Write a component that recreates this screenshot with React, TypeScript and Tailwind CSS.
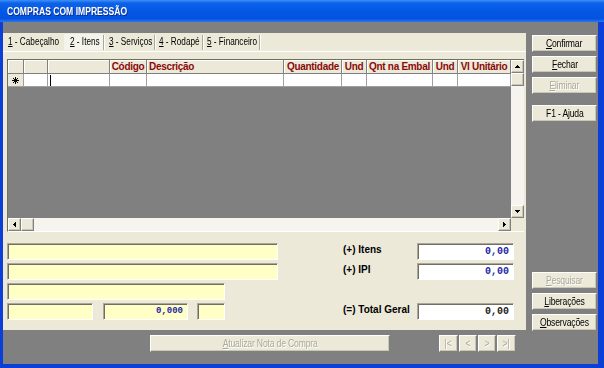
import React from "react";

const sunken =
  "border border-t-[#aca899] border-l-[#aca899] border-b-white border-r-white shadow-[inset_1px_1px_0_#716f64]";
const raised =
  "border border-t-white border-l-white border-b-[#808080] border-r-[#808080] shadow-[inset_-1px_-1px_0_#c9c6b6]";

function Arrow({ dir }: { dir: "up" | "down" | "left" | "right" }) {
  if (dir === "up")
    return (
      <svg width="5" height="3" viewBox="0 0 5 3" shapeRendering="crispEdges">
        <polygon points="2.5,0 5,3 0,3" fill="#000" />
      </svg>
    );
  if (dir === "down")
    return (
      <svg width="5" height="3" viewBox="0 0 5 3" shapeRendering="crispEdges">
        <polygon points="0,0 5,0 2.5,3" fill="#000" />
      </svg>
    );
  if (dir === "left")
    return (
      <svg width="3" height="5" viewBox="0 0 3 5" shapeRendering="crispEdges">
        <polygon points="3,0 3,5 0,2.5" fill="#000" />
      </svg>
    );
  return (
    <svg width="3" height="5" viewBox="0 0 3 5" shapeRendering="crispEdges">
      <polygon points="0,0 0,5 3,2.5" fill="#000" />
    </svg>
  );
}

function ScrollBtn({ dir }: { dir: "up" | "down" | "left" | "right" }) {
  return (
    <div className={`w-[13px] h-[13px] shrink-0 bg-[#ece9d8] flex items-center justify-center ${raised}`}>
      <Arrow dir={dir} />
    </div>
  );
}

function Btn({
  children,
  disabled,
  className = "",
}: {
  children: React.ReactNode;
  disabled?: boolean;
  className?: string;
}) {
  return (
    <div
      className={`h-[17px] shrink-0 flex items-center justify-center bg-[#ece9d8] leading-none ${raised} ${
        disabled ? "text-[#aca899] [text-shadow:1px_1px_0_#ffffff]" : "text-black"
      } ${className}`}
    >
      <span className="inline-block whitespace-nowrap scale-x-[0.86] tracking-[-0.2px]">{children}</span>
    </div>
  );
}

function Field({ className = "", value, blue = true, small }: { className?: string; value?: string; blue?: boolean; small?: boolean }) {
  return (
    <div className={`h-[17px] shrink-0 flex items-center justify-end pr-[4px] ${sunken} ${className}`}>
      {value && (
        <span
          className={`font-['Liberation_Mono',monospace] font-bold leading-none ${small ? "text-[9px]" : "text-[10px]"} ${
            blue ? "text-[#1f1fa8]" : "text-[#222222]"
          }`}
        >
          {value}
        </span>
      )}
    </div>
  );
}

function Star() {
  return (
    <svg width="7" height="7" viewBox="0 0 7 7" shapeRendering="crispEdges">
      <line x1="3.5" y1="0" x2="3.5" y2="7" stroke="#000" />
      <line x1="0" y1="3.5" x2="7" y2="3.5" stroke="#000" />
      <line x1="1" y1="1" x2="6" y2="6" stroke="#000" />
      <line x1="6" y1="1" x2="1" y2="6" stroke="#000" />
    </svg>
  );
}

const cols = [
  { w: "w-[16px]", label: "", align: "justify-center" },
  { w: "w-[24px]", label: "", align: "justify-center" },
  { w: "w-[62px]", label: "", align: "justify-center" },
  { w: "w-[37px]", label: "Código", align: "justify-center" },
  { w: "w-[137px]", label: "Descrição", align: "justify-start pl-[2px]" },
  { w: "w-[58px]", label: "Quantidade", align: "justify-end pr-[2px]" },
  { w: "w-[25px]", label: "Und", align: "justify-center" },
  { w: "w-[66px]", label: "Qnt na Embal", align: "justify-center" },
  { w: "w-[25px]", label: "Und", align: "justify-center" },
  { w: "w-[53px]", label: "Vl Unitário", align: "justify-center" },
];

function Tab({ n, t, cls }: { n: string; t: string; cls: string }) {
  return (
    <div className={`h-[16px] flex items-center whitespace-nowrap overflow-hidden ${cls}`}>
      <span className="inline-block origin-left scale-x-[0.82] leading-none">
        <u className="underline-offset-1">{n}</u>
        {t}
      </span>
    </div>
  );
}

function Sep() {
  return <div className="w-[2px] h-[15px] shrink-0 border-l border-l-[#aca899] border-r border-r-white" />;
}

export default function App() {
  return (
    <div className="w-[604px] h-[368px] flex flex-col bg-[#0b3fd7] overflow-hidden font-['Liberation_Sans',Arial,sans-serif] text-[10px] text-black select-none">
      {/* Title bar */}
      <div className="h-[22px] shrink-0 flex items-center pl-[7px] bg-[linear-gradient(to_bottom,#3d90f8_0%,#0d62e8_14%,#0458e6_50%,#0352df_85%,#2c78ef_100%)]">
        <span className="inline-block origin-left scale-x-[0.78] text-[11px] font-bold text-white [text-shadow:1px_1px_0_#0a2a8c] leading-none">
          COMPRAS COM IMPRESSÃO
        </span>
      </div>

      {/* Body */}
      <div className="flex-1 min-h-0 flex ml-[3px] mr-[6px] mb-[4px] bg-[#808080]">
        {/* Left column */}
        <div className="w-[523px] shrink-0 flex flex-col pt-[11px]">
          {/* Tab panel */}
          <div className="h-[297px] shrink-0 flex flex-col bg-[#ece9d8]">
            {/* Tab strip */}
            <div className="h-[18px] shrink-0 flex items-center">
              <Tab n="1" t=" - Cabeçalho" cls="w-[61px] pl-[5px]" />
              <Tab n="2" t=" - Itens" cls="w-[39px] pl-[6px] bg-[#f4f3ec]" />
              <Sep />
              <Tab n="3" t=" - Serviços" cls="w-[49px] pl-[4px]" />
              <Sep />
              <Tab n="4" t=" - Rodapé" cls="w-[46px] pl-[3px]" />
              <Sep />
              <Tab n="5" t=" - Financeiro" cls="w-[55px] pl-[3px]" />
              <Sep />
            </div>

            {/* Content */}
            <div className="flex-1 flex flex-col border-t border-t-white pt-[7px] pl-[4px] pr-[2px] pb-[10px]">
              {/* Grid */}
              <div className="h-[173px] shrink-0 flex flex-col border-l border-t border-b border-l-[#716f64] border-t-[#716f64] border-b-white">
                <div className="flex-1 min-h-0 flex">
                  <div className="w-[503px] flex flex-col bg-[#808080]">
                    {/* Header */}
                    <div className="h-[14px] flex bg-[#ece9d8]">
                      {cols.map((c, i) => (
                        <div
                          key={i}
                          className={`${c.w} h-[14px] shrink-0 flex items-center ${c.align} border-r border-b border-r-[#808080] border-b-[#808080] shadow-[inset_1px_1px_0_#ffffff] font-bold text-[#8b0a0a] whitespace-nowrap leading-none tracking-[-0.3px] overflow-hidden`}
                        >
                          {c.label}
                        </div>
                      ))}
                    </div>
                    {/* Row */}
                    <div className="h-[13px] flex">
                      {cols.map((c, i) => (
                        <div
                          key={i}
                          className={`${c.w} h-[13px] shrink-0 flex items-center border-r border-b border-r-[#a0a0a0] border-b-[#a0a0a0] ${
                            i === 0 ? "bg-[#ece9d8] justify-center" : "bg-white"
                          }`}
                        >
                          {i === 0 && <Star />}
                          {i === 2 && <div className="ml-[2px] w-[1px] h-[11px] bg-black" />}
                        </div>
                      ))}
                    </div>
                  </div>
                  {/* Vertical scrollbar */}
                  <div className="w-[13px] flex flex-col">
                    <ScrollBtn dir="up" />
                    <div className={`h-[13px] shrink-0 bg-[#ece9d8] ${raised}`} />
                    <div className="flex-1 bg-[#f5f4ef]" />
                    <ScrollBtn dir="down" />
                  </div>
                </div>
                {/* Horizontal scrollbar */}
                <div className="h-[13px] shrink-0 flex">
                  <ScrollBtn dir="left" />
                  <div className={`w-[13px] h-[13px] shrink-0 bg-[#ece9d8] ${raised}`} />
                  <div className="flex-1 bg-[#f5f4ef]" />
                  <ScrollBtn dir="right" />
                  <div className="w-[13px] h-[13px] shrink-0 bg-[#ece9d8]" />
                </div>
              </div>

              {/* Lower fields */}
              <div className="mt-[11px] flex flex-col gap-[3px]">
                <div className="flex h-[17px]">
                  <div className="w-[336px] shrink-0 flex">
                    <Field className="w-[271px] bg-[#ffffc6]" />
                  </div>
                  <div className="w-[74px] shrink-0 font-bold leading-[12px] pt-[1px]">(+) Itens</div>
                  <Field className="w-[97px] bg-white" value="0,00" />
                </div>
                <div className="flex h-[17px]">
                  <div className="w-[336px] shrink-0 flex">
                    <Field className="w-[271px] bg-[#ffffc6]" />
                  </div>
                  <div className="w-[74px] shrink-0 font-bold leading-[12px] pt-[1px]">(+) IPI</div>
                  <Field className="w-[97px] bg-white" value="0,00" />
                </div>
                <div className="flex h-[17px]">
                  <div className="w-[336px] shrink-0 flex">
                    <Field className="w-[218px] bg-[#ffffc6]" />
                  </div>
                </div>
                <div className="flex h-[17px]">
                  <div className="w-[336px] shrink-0 flex">
                    <Field className="w-[86px] bg-[#ffffc6]" />
                    <Field className="w-[85px] ml-[10px] bg-[#ffffc6]" value="0,000" small />
                    <Field className="w-[28px] ml-[9px] bg-[#ffffc6]" />
                  </div>
                  <div className="w-[74px] shrink-0 font-bold leading-[12px] pt-[1px] whitespace-nowrap">(=) Total Geral</div>
                  <Field className="w-[97px] bg-white" value="0,00" blue={false} />
                </div>
              </div>
            </div>
          </div>

          {/* Bottom row */}
          <div className="mt-[5px] flex">
            <Btn disabled className="ml-[147px] w-[240px]">
              <u>A</u>tualizar Nota de Compra
            </Btn>
            <div className="ml-[49px] flex gap-[1px]">
              <Btn disabled className="w-[19px]">|&lt;</Btn>
              <Btn disabled className="w-[18px]">&lt;</Btn>
              <Btn disabled className="w-[18px]">&gt;</Btn>
              <Btn disabled className="w-[19px]">&gt;|</Btn>
            </div>
          </div>
        </div>

        {/* Right column */}
        <div className="ml-[6px] w-[65px] shrink-0 flex flex-col pt-[13px]">
          <div className="flex flex-col gap-[4px]">
            <Btn>
              <u>C</u>onfirmar
            </Btn>
            <Btn>
              <u>F</u>echar
            </Btn>
            <Btn disabled>
              <u>E</u>liminar
            </Btn>
            <Btn className="mt-[7px]">F1 - Ajuda</Btn>
          </div>
          <div className="mt-[150px] flex flex-col gap-[4px]">
            <Btn disabled>
              <u>P</u>esquisar
            </Btn>
            <Btn>
              <u>L</u>iberações
            </Btn>
            <Btn>
              <u>O</u>bservações
            </Btn>
          </div>
        </div>
      </div>
    </div>
  );
}
